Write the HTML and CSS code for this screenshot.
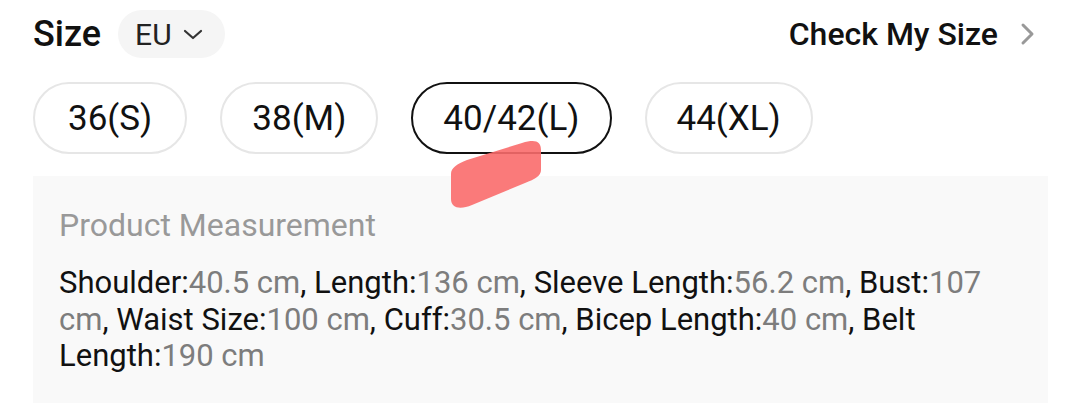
FILE: index.html
```html
<!DOCTYPE html>
<html lang="en">
<head>
  <meta charset="UTF-8" />
  <meta name="viewport" content="width=device-width, initial-scale=1.0"/>
  <title>Size</title>
  <link rel="stylesheet" href="styles.css">
</head>
<body>

  <div class="page">
    <div class="header">
      <div class="header-left">
        <span class="size-title">Size</span>
        <div class="unit-pill">
          <span>EU</span>
          <svg class="chev-down" width="20" height="12" viewBox="0 0 20 12"><path d="M2 2 L10 9 L18 2" fill="none" stroke="#333" stroke-width="2.2" stroke-linecap="round" stroke-linejoin="round"/></svg>
        </div>
      </div>
      <div class="check-size">
        <span>Check My Size</span>
        <svg width="16" height="24" viewBox="0 0 16 24"><path d="M3 3 L12 12 L3 21" fill="none" stroke="#999" stroke-width="3" stroke-linecap="round" stroke-linejoin="round"/></svg>
      </div>
    </div>

    <div class="sizes">
      <div class="size-pill first">36(S)</div>
      <div class="size-pill">38(M)</div>
      <div class="size-pill active">40/42(L)</div>
      <div class="size-pill">44(XL)</div>
    </div>

    <div class="measure">
      <div class="measure-title">Product Measurement</div>
      <p class="measure-text">
        <span class="lbl">Shoulder:</span><span class="val">40.5 cm</span>, <span class="lbl">Length:</span><span class="val">136 cm</span>, <span class="lbl">Sleeve Length:</span><span class="val">56.2 cm</span>, <span class="lbl">Bust:</span><span class="val">107 cm</span>, <span class="lbl">Waist Size:</span><span class="val">100 cm</span>, <span class="lbl">Cuff:</span><span class="val">30.5 cm</span>, <span class="lbl">Bicep Length:</span><span class="val">40 cm</span>, <span class="lbl">Belt Length:</span><span class="val">190 cm</span>
      </p>
    </div>
  </div>

  <!-- hand-drawn highlight on top of the screenshot -->
  <svg class="scribble" width="1080" height="403" viewBox="0 0 1080 403">
    <path d="M451 174 C451 168 457 164 467 160 L522 143 C535 139 541 141 541 150 L541 170 C541 176 535 179 525 183 L472 205 C460 210 451 208 451 199 Z" fill="rgba(250,108,108,0.9)"/>
  </svg>

</body>
</html>
```

FILE: styles.css
```css
* {
  margin: 0; padding: 0; box-sizing: border-box;
}
body {
  font-family: Roboto, 'Noto Sans', sans-serif;
  background: #fff;
  color: #111;
  position: relative;
  width: 1080px;
  height: 403px;
  overflow: hidden;
}
.page {
  padding: 10px 32px 0 33px;
}
.header {
  display: flex;
  align-items: center;
  justify-content: space-between;
  height: 48px;
}
.header-left {
  display: flex;
  align-items: center;
  gap: 17px;
}
.size-title {
  font-size: 36px;
  font-weight: 500;
}
.unit-pill {
  display: flex;
  align-items: center;
  gap: 11px;
  height: 48px;
  padding: 0 22px 0 17px;
  border-radius: 24px;
  background: #f5f5f5;
  font-size: 30px;
  color: #222;
}
.chev-down {
  margin-top: 2px;
}
.check-size {
  display: flex;
  align-items: center;
  gap: 22px;
  font-size: 32px;
  font-weight: 500;
  padding-right: 12px;
}
.sizes {
  display: flex;
  gap: 33px;
  margin-top: 24px;
}
.size-pill {
  height: 72px;
  padding: 0 30px;
  border: 2px solid #e6e6e6;
  border-radius: 36px;
  display: flex;
  align-items: center;
  font-size: 35px;
  color: #111;
}
.size-pill.first {
  padding: 0 33px;
}
.size-pill.active {
  border-color: #111;
}
.measure {
  margin-top: 22px;
  background: #f9f9f9;
  padding: 30px 26px 30px 26px;
  min-height: 240px;
}
.measure-title {
  font-size: 32px;
  color: #999;
}
.measure-text {
  margin-top: 21px;
  font-size: 31px;
  line-height: 36.5px;
}
.lbl {
  color: #111;
}
.val {
  color: #7d7d7d;
}
.scribble {
  position: absolute;
  top: 0;
  left: 0;
  pointer-events: none;
}
```
